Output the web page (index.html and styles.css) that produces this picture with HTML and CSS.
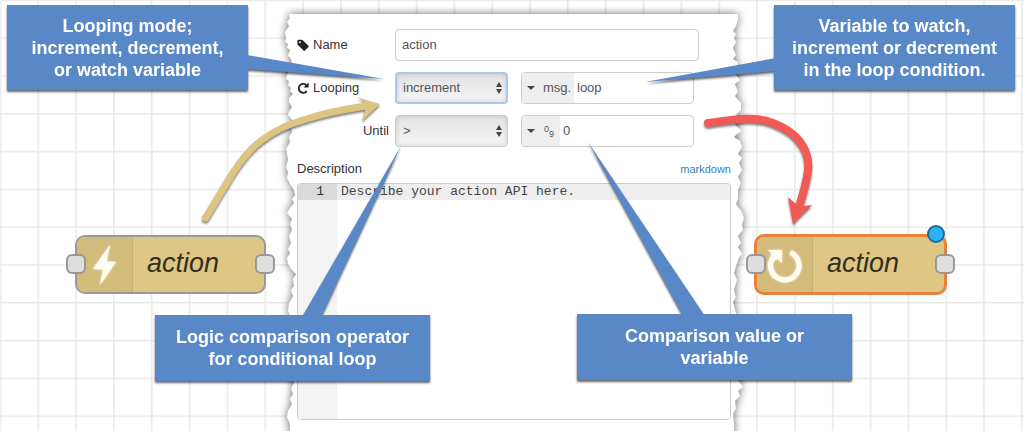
FILE: index.html
```
<!DOCTYPE html>
<html lang="en">
<head>
<meta charset="utf-8">
<title>Loop action</title>
<link rel="stylesheet" href="styles.css">
</head>
<body>
<main class="stage">
  <svg class="layer" aria-hidden="true">
    <defs>
      <pattern id="grid" x="-0.4" y="-0.4" width="37.83" height="37.8" patternUnits="userSpaceOnUse">
        <path d="M0 0.8H38M0.8 0V38" stroke="#e9e9e9" stroke-width="1.6" fill="none"/>
      </pattern>
    </defs>
    <rect width="100%" height="100%" fill="url(#grid)"/>
    <path class="paper" d="M289 14L290 18 287 22 289 26 287 29 285 32 286 38 285 42 288 44 287 48 290 50 288 55 291 59 292 64 289 69 287 75 286 79 289 81 288 85 291 88 290 91 293 94 289 98 289 102 292 107 289 112 288 115 293 121 294 123 291 127 292 132 289 137 290 142 286 149 287 153 288 160 286 167 288 172 287 178 290 184 294 190 295 195 292 199 294 203 290 208 287 213 292 219 290 224 292 230 289 236 291 243 288 249 290 253 287 258 288 264 291 269 296 274 293 279 294 286 291 290 293 296 289 303 288 311 291 318 291 378 294 383 291 388 293 394 290 399 292 404 288 411 287 417 290 424 289 450H734L734 424 733 414 736 408 735 401 740 396 738 391 743 387 738 380 736 313 733 302 736 297 734 290 737 280 734 273 736 266 739 258 742 254 738 247 741 243 738 236 743 230 742 225 744 218 742 212 736 204 738 199 738 190 741 183 738 177 742 170 739 163 742 158 738 154 742 147 740 141 734 137 737 134 742 131 735 125 739 120 736 115 741 110 741 103 735 96 738 92 735 84 740 80 736 75 738 62 733 59 736 55 733 48 736 42 734 38 736 34 733 31 736 26 738 20 738 14Z"/>
  </svg>

  <form class="panel">
    <div class="row">
      <label class="label" for="name">
        <svg class="icon" viewBox="0 0 14 14"><path d="M0.500 1.800V6L7 12.500Q7.800 13.200 8.500 12.500L12.300 8.700Q13 8 12.300 7.200L6.200 1.300Q5.600 0.800 4.800 0.800H1.500Q0.500 0.800 0.500 1.800Z" fill="#222"/><circle cx="3.200" cy="3.500" r="1" fill="#fff"/></svg>
        Name</label>
      <input class="field name" id="name" type="text" value="action">
    </div>
    <div class="row">
      <label class="label" for="mode">
        <svg class="icon" viewBox="0 0 14 14"><path d="M10.500 9.800A4.800 4.800 0 1 1 9.900 3.300" fill="none" stroke="#222" stroke-width="2"/><path d="M12.500 0.500V6H7Z" fill="#222"/></svg>
        Looping</label>
      <div class="picker focus">
        <select id="mode"><option>increment</option><option>decrement</option><option>watch</option></select>
        <svg class="updown" viewBox="0 0 6 12"><path d="M3 0L6 5H0ZM0 7H6L3 12Z" fill="#444"/></svg>
      </div>
      <div class="typed">
        <button type="button" class="type msg"><svg class="caret" viewBox="0 0 8 4"><path d="M0 0H8L4 4Z" fill="#444"/></svg>msg.</button>
        <input type="text" value="loop" aria-label="Variable">
      </div>
    </div>
    <div class="row">
      <label class="label right" for="operator">Until</label>
      <div class="picker">
        <select id="operator"><option>&gt;</option><option>&lt;</option></select>
        <svg class="updown" viewBox="0 0 6 12"><path d="M3 0L6 5H0ZM0 7H6L3 12Z" fill="#444"/></svg>
      </div>
      <div class="typed">
        <button type="button" class="type number" aria-label="Number"><svg class="caret" viewBox="0 0 8 4"><path d="M0 0H8L4 4Z" fill="#444"/></svg><span class="digits"><sup>0</sup><sub>9</sub></span></button>
        <input type="text" value="0" aria-label="Value">
      </div>
    </div>
    <div class="heading">
      <label for="description">Description</label>
      <a href="#markdown">markdown</a>
    </div>
    <div class="editor">
      <div class="gutter">1</div>
      <textarea id="description" spellcheck="false">Describe your action API here.</textarea>
    </div>
  </form>

  <div class="node first">
    <div class="badge"><svg viewBox="0 0 56 56"><path d="M33 8L16 32L26 32.500L23 48L39 25L29.500 24.500Z" fill="#fffdf2"/></svg></div>
    <span class="title">action</span>
    <i class="port in"></i><i class="port out"></i>
  </div>
  <div class="node second">
    <div class="badge"><svg viewBox="0 0 56 56"><path d="M33.500 15.500A14.300 14.300 0 1 1 16 20.500" fill="none" stroke="#fffdf2" stroke-width="5"/><path d="M11 13H25V26L20.500 22L16 24L13.500 19L15 17Z" fill="#fffdf2"/></svg></div>
    <span class="title">action</span>
    <i class="port in"></i><i class="port out"></i><i class="status"></i>
  </div>

  <svg class="layer arrows" aria-hidden="true">
    <g fill="none" stroke-linecap="round">
      <path d="M205.500 218C235 172 245 138 300 121Q330 111 366 106" stroke="#dcc481" stroke-width="7"/>
      <path d="M708 123C730 120 755 115 773 123C802 134 812 155 807 177Q804 192 799 207" stroke="#f25b55" stroke-width="8"/>
    </g>
    <path d="M357 97L380 104L362 121L365 110V102Z" fill="#dcc481"/>
    <path d="M788 197L796 204L803 206L812 205L793 224Z" fill="#f25b55"/>
  </svg>

  <div class="callouts">
    <svg class="layer" aria-hidden="true">
      <path d="M247 55L384 79L247 69ZM776 58L645 82L776 71ZM302 317L401 146L321 317ZM683 316L588 142L705 316Z" fill="#5888c7"/>
    </svg>
    <p class="callout mode">Looping mode;<br>increment, decrement,<br>or watch variable</p>
    <p class="callout variable">Variable to watch,<br>increment or decrement<br>in the loop condition.</p>
    <p class="callout operator">Logic comparison operator<br>for conditional loop</p>
    <p class="callout value">Comparison value or<br>variable</p>
  </div>
</main>
</body>
</html>
```
FILE: styles.css
```
* { box-sizing: border-box; }
body {
  margin: 0;
  font: 13px/20px "Liberation Sans", Arial, sans-serif;
  color: #333;
  background: #fff;
}
input, select, button, textarea { font: inherit; color: #555; margin: 0; }
.stage { position: relative; min-height: 100vh; overflow: hidden; }
.layer { position: absolute; inset: 0; width: 100%; height: 100%; pointer-events: none; }
.paper { fill: #fff; filter: drop-shadow(0 0 4px rgba(0, 0, 0, .6)); }

.panel {
  position: absolute;
  left: 289px;
  top: 14px;
  bottom: 0;
  width: 450px;
  padding: 15px 8px 11px;
  display: flex;
  flex-direction: column;
  gap: 11px;
}
.row { display: flex; align-items: stretch; height: 32px; }
.label { width: 98px; display: flex; align-items: center; gap: 3px; padding-right: 6px; }
.label.right { justify-content: flex-end; }
.icon { width: 13px; height: 13px; }
.field { width: 304px; border: 1px solid #ccc; border-radius: 4px; padding: 0 6px; background: #fff; }
.picker { display: grid; width: 113px; margin-right: 13px; align-items: center; }
.picker select {
  grid-area: 1 / 1;
  height: 32px;
  width: 100%;
  appearance: none;
  padding: 0 7px;
  border: 1px solid #ccc;
  border-radius: 4px;
  background: linear-gradient(#e3e3e3, #f5f5f5);
  box-shadow: inset 0 0 5px rgba(0, 0, 0, .15);
}
.picker.focus select { border: 2px solid #a9c9ec; padding: 0 6px; }
.updown { grid-area: 1 / 1; justify-self: end; width: 6px; height: 12px; margin-right: 6px; pointer-events: none; }
.typed { display: flex; width: 173px; border: 1px solid #ccc; border-radius: 4px; overflow: hidden; background: #fff; }
.typed input { flex: 1; min-width: 0; border: 0; padding: 0 3px; background: none; }
.type { display: flex; align-items: center; gap: 8px; border: 0; padding: 0 0 0 5px; background: #eee; }
.msg { width: 52px; }
.number { width: 38px; gap: 9px; }
.caret { width: 8px; height: 4px; flex: none; }
.digits { display: flex; font-size: 9px; line-height: 10px; }
.digits sup { font-size: inherit; vertical-align: baseline; padding-bottom: 5px; }
.digits sub { font-size: inherit; vertical-align: baseline; padding-top: 5px; }
.heading { display: flex; justify-content: space-between; padding-top: 1px; margin-bottom: -7px; }
.heading a { font-size: 11px; color: #2f7fc1; text-decoration: none; }
.editor {
  flex: 1;
  min-height: 0;
  display: flex;
  border: 1px solid #ccc;
  border-radius: 4px;
  overflow: hidden;
  font: 13px/16px "Liberation Mono", "Courier New", monospace;
}
.gutter { width: 39px; padding-right: 13px; text-align: right; background: linear-gradient(#dadada 16px, #f3f3f3 16px); }
.editor textarea {
  flex: 1;
  border: 0;
  outline: 0;
  resize: none;
  padding: 0 4px;
  color: #444;
  background: linear-gradient(#eee 16px, #fff 16px);
}

.node {
  position: absolute;
  width: 191px;
  height: 59px;
  display: flex;
  align-items: stretch;
  border: 2px solid #999;
  border-radius: 10px;
  background: #dec684;
}
.first { left: 75px; top: 235px; }
.second { left: 754px; top: 234px; width: 193px; height: 61px; border: 3px solid #e8823a; }
.badge { width: 56px; background: #d3bb7b; border-right: 1px solid #c3ae76; border-radius: 7px 0 0 7px; }
.badge svg { display: block; width: 56px; height: 56px; filter: drop-shadow(0 0 1px #fffdf2); }
.title { padding-left: 14px; font-size: 27px; line-height: 53px; font-style: italic; color: #332f20; }
.port {
  position: absolute;
  top: 17px;
  width: 20px;
  height: 20px;
  border: 2px solid #999;
  border-radius: 6px;
  background: #ddd;
}
.in { left: -11px; }
.out { right: -11px; }
.status {
  position: absolute;
  right: -1px;
  top: -12px;
  width: 18px;
  height: 18px;
  border: 2px solid #1c6d96;
  border-radius: 50%;
  background: #2bb3f5;
}

.arrows { filter: drop-shadow(0 2px 1px rgba(0, 0, 0, .5)); }
.callouts { position: absolute; inset: 0; pointer-events: none; filter: drop-shadow(0 2px 1px rgba(0, 0, 0, .6)); }
.callout {
  position: absolute;
  display: grid;
  align-content: center;
  margin: 0;
  padding: 10px 8px 9px;
  background: #5888c7;
  color: #fff;
  font-size: 18px;
  line-height: 22px;
  font-weight: bold;
  text-align: center;
}
.callout.mode, .callout.variable { top: 5px; width: 241px; }
.callout.mode { left: 7px; }
.callout.variable { left: 774px; }
.callout.operator, .callout.value { width: 275px; padding: 11px 8px; }
.callout.operator { left: 155px; top: 315px; }
.callout.value { left: 577px; top: 314px; }
```
